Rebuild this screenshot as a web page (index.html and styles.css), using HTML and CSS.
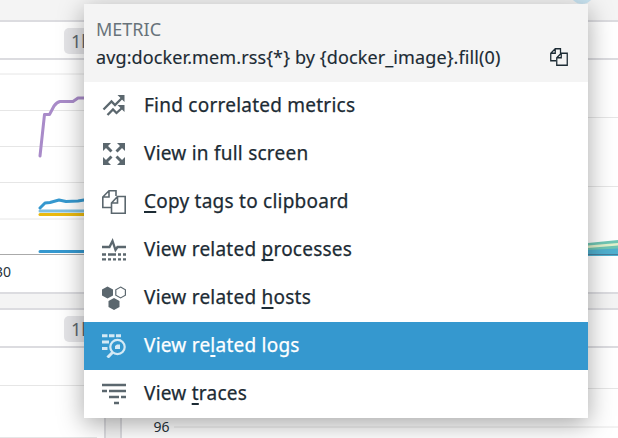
FILE: index.html
```html
<!DOCTYPE html>
<html lang="en">
<head>
<meta charset="utf-8">
<title>Metric menu</title>
<link rel="stylesheet" href="styles.css">
</head>
<body>
<main class="board">
  <div class="row row-top">
    <section class="panel">
      <header class="panel-head"><span class="range">1h</span></header>
      <svg class="chart" width="104" height="232" viewBox="0 60 104 232">
        <g class="grid"><path d="M0 74H105M0 110.5H105M0 146.5H105M0 182.5H105M0 219H105"/></g>
        <path class="axis" d="M0 254.5H105"/>
        <g class="series">
          <path stroke="#a98bc9" d="M40 156L44.5 114.500H49.500L54 106Q57 102 60 101.500H73L78 98H105"/>
          <path stroke="#eab90f" d="M40 214.500H105"/>
          <path stroke="#80bfe0" d="M40 211H105"/>
          <path stroke="#3598cf" d="M40 208L45 203L50 202.500L59 200L66 201.500L78 201L84 200H105M40 251.500H105"/>
        </g>
        <text class="tick" x="-5" y="276.500">30</text>
      </svg>
    </section>
    <section class="panel">
      <header class="panel-head"></header>
      <svg class="chart" width="496" height="232" viewBox="122 60 496 232">
        <g class="grid"><path d="M122 117.500H618M122 186.500H618"/></g>
        <path fill="#70c6b4" d="M588 243L618 240V256H588Z"/>
        <path fill="#e2f1cb" d="M588 245.500L618 243V245.500L588 248Z"/>
        <path fill="#4fb0cf" d="M588 250L618 248.500V256H588Z"/>
        <path stroke="#4a7d9b" d="M588 254.500H618"/>
      </svg>
    </section>
  </div>
  <div class="row row-bottom">
    <section class="panel">
      <header class="panel-head"><span class="range">1h</span></header>
      <svg class="chart" width="104" height="90" viewBox="0 348 104 90">
        <g class="grid"><path d="M0 385.500H105M0 437.500H97"/></g>
      </svg>
    </section>
    <section class="panel">
      <header class="panel-head"></header>
      <svg class="chart" width="496" height="90" viewBox="122 348 496 90">
        <g class="grid"><path d="M174 388.500H618M174 427H618"/></g>
        <text class="tick" x="153.500" y="431.500">96</text>
      </svg>
    </section>
  </div>
</main>
<span class="bubble"></span>

<div class="menu">
  <header class="menu-head">
    <div>
      <div class="kind">METRIC</div>
      <div class="query">avg:docker.mem.rss{*} by {docker_image}.fill(0)</div>
    </div>
    <svg class="copy" width="18" height="18" viewBox="0 0 24 24"><path d="M8 17H1V7L7 1H14V7M7 1V7H1M9 13L15 7H23V23H9ZM15 7V13H9"/></svg>
  </header>
  <ul class="items">
    <li><svg class="ico line" viewBox="0 0 24 24"><g stroke-width="2.300"><path d="M1.500 15.500L9.500 7.500L13 11L20 4M5.500 21L11 15.500L14.500 19L20 14"/></g><path class="solid" d="M15.500 1H22.500V8ZM15.500 11H22.500V18Z"/></svg><span>Find correlated metrics</span></li>
    <li><svg class="ico line" viewBox="0 0 24 24"><path stroke-width="2.900" d="M4 4L9.500 9.500M20 4L14.500 9.500M4 20L9.500 14.500M20 20L14.500 14.500"/><path class="solid" d="M1 1H9L1 9ZM15 1H23V9ZM1 15V23H9ZM23 15V23H15Z"/></svg><span>View in full screen</span></li>
    <li><svg class="ico line" viewBox="0 0 24 24"><path stroke-width="1.600" d="M9 17.500H.8V7L7 .8H14V6M7 .8V7H.8M9.500 13L15.500 6.500H23.200V23.200H9.500ZM15.500 6.500V13H9.500"/></svg><span><u>C</u>opy tags to clipboard</span></li>
    <li><svg class="ico line" viewBox="0 0 24 24"><path stroke-width="2.300" d="M0 9H7.500L10.500 3L13.500 12L15.500 9H24"/><path stroke-width="2.300" d="M0 16.500H4M6 16.500H14M16 16.500H19M21 16.500H24M0 21.300H4M6 21.300H9M11 21.300H14M16 21.300H19M21 21.300H24"/></svg><span>View related <u>p</u>rocesses</span></li>
    <li><svg class="ico line" viewBox="0 0 24 24"><path class="solid" d="M5.500 .5L11 3.500V9.500L5.500 12.500L0 9.500V3.500ZM12 12L17.500 15V21L12 24L6.500 21V15Z"/><path stroke-width="1.200" d="M18.600 1.100L23.400 3.800V9.200L18.600 11.900L13.800 9.200V3.800Z"/></svg><span>View related <u>h</u>osts</span></li>
    <li class="active"><svg class="ico line" viewBox="0 0 24 24"><path stroke-width="3" d="M0 1.800H5.500M7 1.800H12.500M14 1.800H19M0 8H7M0 14.500H5.500"/><circle cx="15.500" cy="13" r="7.200" stroke-width="2.200"/><path stroke-width="3" d="M10.500 18.500L5.500 23.500"/><path class="solid" d="M13 12L15 10.500H18V15H13Z"/></svg><span>View re<u>l</u>ated logs</span></li>
    <li><svg class="ico line" viewBox="0 0 24 24"><path stroke-width="2.600" d="M0 3H24M0 9H5M7 9H24M7 15H17M19 15H24M12 21H17"/></svg><span>View <u>t</u>races</span></li>
  </ul>
</div>
</body>
</html>
```

FILE: styles.css
```css
* { box-sizing: border-box; }
body {
  margin: 0;
  width: 618px;
  height: 438px;
  overflow: hidden;
  position: relative;
  background: #f4f4f4;
  color: #1c2b34;
  font-family: "Noto Sans", sans-serif;
}
.board { padding-top: 20px; height: 438px; overflow: hidden; }
.row { display: flex; }
.row-top { height: 274px; margin-bottom: 14px; }
.row-bottom { height: 132px; }
.panel {
  flex: none;
  width: 106px;
  background: #fff;
  border: 2px solid #dcdce0;
  border-left: 0;
  overflow: hidden;
}
.panel + .panel { width: 498px; margin-left: 14px; border-left: 2px solid #dcdce0; border-right: 0; }
.row-bottom .panel { height: 140px; }
.panel-head {
  height: 38px;
  padding: 6px 0 0 64px;
  border-bottom: 2px solid #dcdce0;
}
.range {
  display: block;
  width: 40px;
  height: 26px;
  padding-left: 7px;
  border-radius: 5px 0 0 5px;
  background: #e5e5e8;
  color: #5c676d;
  font-size: 18px;
  line-height: 27px;
}
.chart { display: block; fill: none; }
.grid { stroke: #e6e6e6; }
.axis { stroke: #aaa; }
.series { stroke-width: 3; stroke-linecap: round; stroke-linejoin: round; }
.tick { fill: #27333b; font-size: 14px; }
.bubble {
  position: absolute;
  left: 570px;
  top: -20px;
  width: 24px;
  height: 24px;
  border-radius: 50%;
  background: #c9e4f2;
}
.menu {
  position: absolute;
  left: 84px;
  top: 4px;
  width: 504px;
  height: 414px;
  background: #fff;
  box-shadow: 0 6px 24px rgba(0, 0, 0, .35);
}
.menu-head {
  display: flex;
  justify-content: space-between;
  height: 78px;
  padding: 11px 20px 0 12px;
  background: #f4f4f4;
}
.kind { height: 28px; color: #68737a; font-size: 18px; line-height: 28px; }
.query { font-size: 18px; line-height: 28px; letter-spacing: .11px; -webkit-text-stroke: .15px currentColor; }
.copy { margin-top: 33px; fill: none; stroke: #1c2b34; stroke-width: 1.700; }
.items { margin: 0; padding: 0; list-style: none; }
.items li {
  display: flex;
  align-items: center;
  gap: 18px;
  height: 48px;
  padding-left: 18px;
  font-size: 19px;
  letter-spacing: .235px;
  -webkit-text-stroke: .25px currentColor;
}
.items span { white-space: nowrap; margin-top: -2px; }
.ico { width: 24px; height: 24px; color: #5b676e; }
.line { fill: none; stroke: currentColor; }
.solid { fill: currentColor; stroke: none; }
.items .active { background: #3598cf; color: #fff; }
.active .ico { color: #d4e9f5; }
u { text-decoration-thickness: 2px; text-underline-offset: 3px; text-decoration-skip-ink: none; }
```
